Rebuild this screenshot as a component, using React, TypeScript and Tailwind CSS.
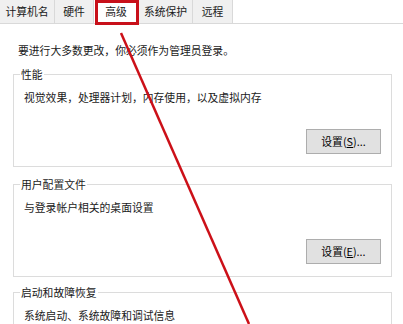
import React from 'react'

const font = { fontFamily: '"Noto Sans CJK SC", "Microsoft YaHei", sans-serif' }

const tabs = [
  { label: '计算机名', w: 'w-[55px]' },
  { label: '硬件', w: 'w-[39px]' },
  { label: '高级', w: 'w-[45px]', active: true },
  { label: '系统保护', w: 'w-[54px]' },
  { label: '远程', w: 'w-[40px]' },
]

function Group({
  title,
  desc,
  button,
  hotkey,
  className,
}: {
  title: string
  desc: string
  button?: boolean
  hotkey?: string
  className?: string
}) {
  return (
    <fieldset className={`ml-[13px] w-[379px] border border-[#dcdcdc] px-[10px] pb-[12px] ${className ?? ''}`}>
      <legend className="-ml-[4px] px-[1px] text-[10.8px] leading-[14px] text-[#1a1a1a]">{title}</legend>
      <p className="mt-[8px] text-[10.8px] leading-[16px] text-[#1a1a1a]">{desc}</p>
      {button && (
        <div className="flex justify-end mt-[24px]">
          <button className="w-[75px] h-[25px] bg-[#e1e1e1] border border-[#adadad] text-[10.8px] text-black flex items-center justify-center">
            设置(<span className="underline">{hotkey}</span>)...
          </button>
        </div>
      )}
    </fieldset>
  )
}

export default function App() {
  return (
    <div className="relative w-[403px] h-[324px] overflow-hidden bg-white" style={font}>
      {/* tabs */}
      <div className="flex h-[24px] border-b border-[#d9d9d9]">
        {tabs.map(t => (
          <div
            key={t.label}
            className={`${t.w} h-full flex items-center justify-center border-r border-[#d9d9d9] text-[10.8px] text-[#1a1a1a] ${
              t.active ? 'bg-white' : 'bg-[#f0f0f0]'
            }`}
          >
            {t.label}
          </div>
        ))}
      </div>

      <p className="pl-[18px] pt-[18px] text-[10.8px] leading-[16px] text-[#1a1a1a]">
        要进行大多数更改，你必须作为管理员登录。
      </p>

      <Group className="mt-[9px]" title="性能" desc="视觉效果，处理器计划，内存使用，以及虚拟内存" button hotkey="S" />
      <Group className="mt-[10px]" title="用户配置文件" desc="与登录帐户相关的桌面设置" button hotkey="E" />
      <Group className="mt-[8px]" title="启动和故障恢复" desc="系统启动、系统故障和调试信息" />

      {/* annotation */}
      <div className="absolute left-[95px] top-0 w-[44px] h-[25px] border-[3px] border-[#c8101a]" />
      <svg className="absolute inset-0 pointer-events-none" width="403" height="324">
        <line x1="121" y1="33" x2="249" y2="324" stroke="#cc1018" strokeWidth="2.5" />
      </svg>
    </div>
  )
}
